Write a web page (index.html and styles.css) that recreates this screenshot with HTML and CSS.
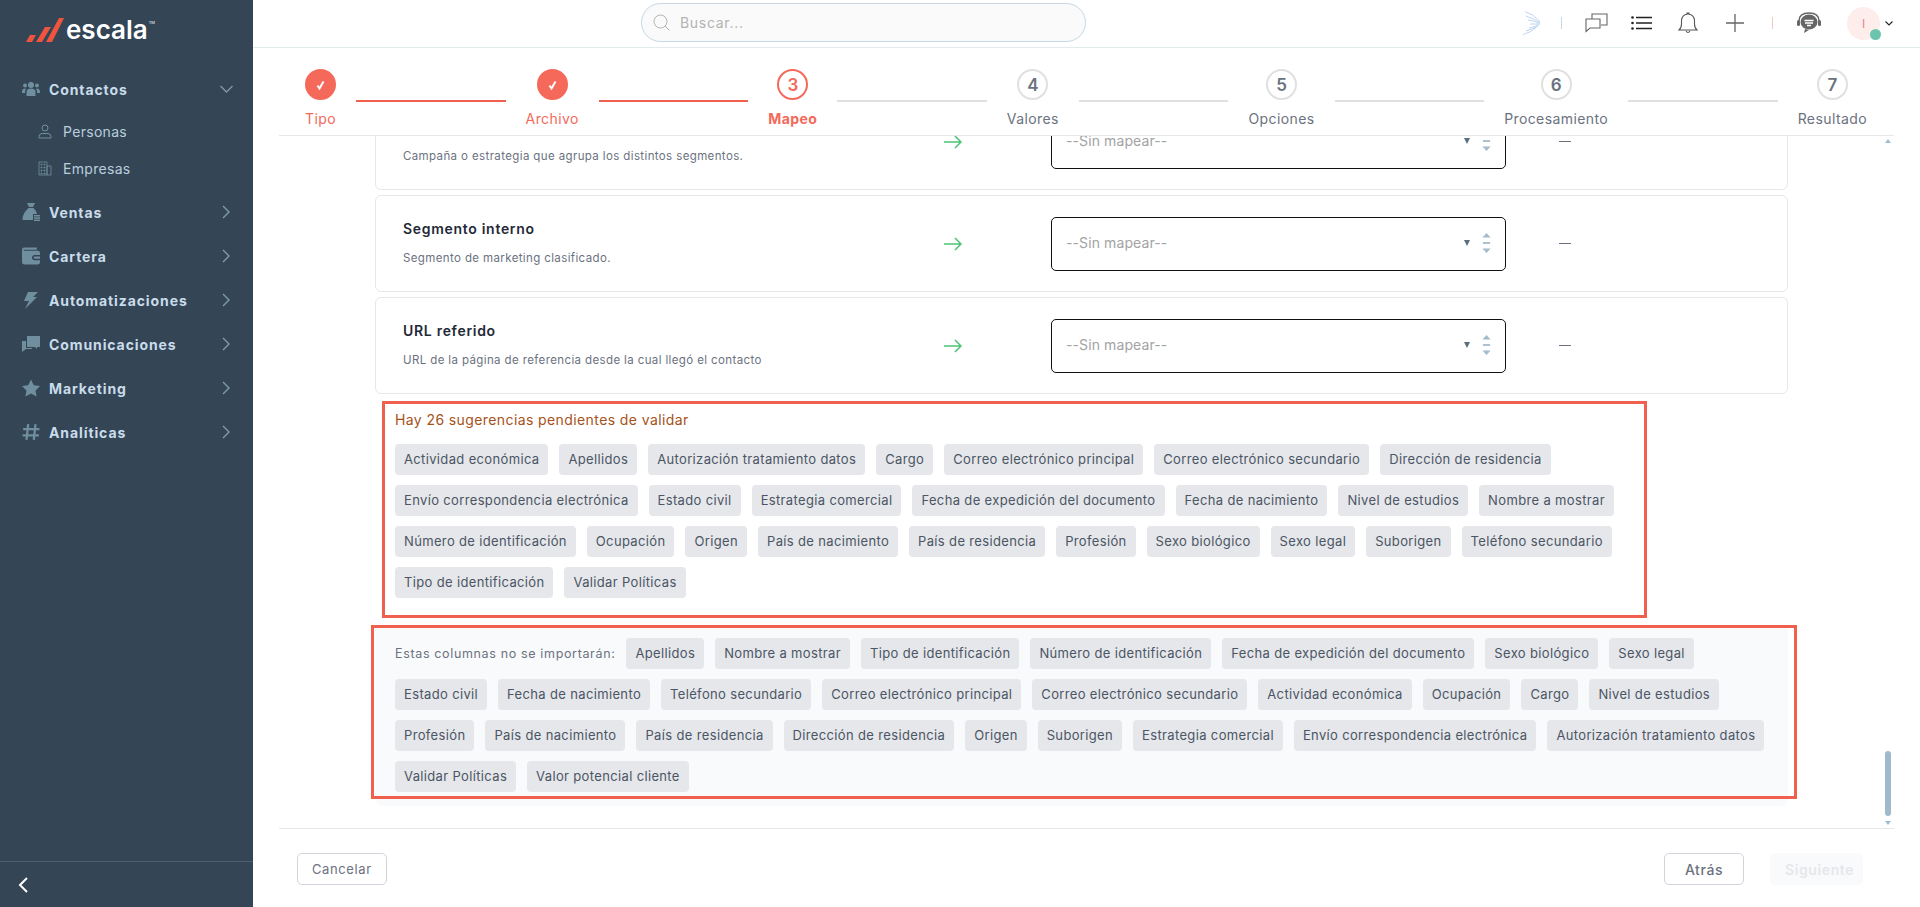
FILE: index.html
```html
<!DOCTYPE html>
<html lang="es">
<head>
    <meta charset="UTF-8">
    <title>Escala - Importar contactos</title>
    <link rel="stylesheet" href="styles.css">
</head>
<body>
    <svg class="defs" width="0" height="0">
        <symbol id="chev" viewBox="0 0 10 16"><path d="M2 2l6 6-6 6" fill="none" stroke="currentColor" stroke-width="1.4"/></symbol>
        <symbol id="arrow" viewBox="0 0 18 14"><path d="M0 7h17M11 1l6 6-6 6" fill="none" stroke="currentColor" stroke-width="1.5"/></symbol>
        <symbol id="spin" viewBox="0 0 10 22"><path d="M5 0l4.500 5H.5zM5 22l4.500-5H.5z" fill="#a3bccb"/><rect x="1" y="10" width="8" height="2" fill="#a3bccb"/></symbol>
        <symbol id="check" viewBox="0 0 9 10"><path d="M1.500 5.500L3.500 8.500 7.500 1.500" fill="none" stroke="#fff" stroke-width="2"/></symbol>
    </svg>

    <aside class="sidebar">
        <div class="logo">
            <svg width="38" height="26" viewBox="0 0 38 26"><path d="M0 25l4-7h6l-4 7zM10 25l9-15h6l-9 15zM20 25L33 1h5L26 25z" fill="#f0533e"/></svg>
            <span class="logo-text">escala</span><span class="logo-tm">TM</span>
        </div>
        <nav class="menu">
            <a class="menu-item">
                <svg class="menu-icon" viewBox="0 0 18 16"><circle cx="9" cy="4" r="3"/><circle cx="3" cy="4.5" r="2"/><circle cx="15" cy="4.5" r="2"/><path d="M4.500 15V11q0-3.500 4.500-3.500t4.500 3.500v4zM0 11q0-3.500 3-3.500l1 .5q-1 1-1 3v1H0zM18 11q0-3.500-3-3.500l-1 .5q1 1 1 3v1h3z"/></svg>
                <span>Contactos</span>
                <svg class="menu-chev down" viewBox="0 0 14 8"><path d="M1 1l6 6 6-6" fill="none" stroke="currentColor" stroke-width="1.300"/></svg>
            </a>
            <div class="menu-subs">
                <a class="menu-sub">
                    <svg class="sub-icon" viewBox="0 0 14 15"><circle cx="7" cy="4" r="3" fill="none" stroke="currentColor"/><path d="M1 14v-1.500q0-2.500 3-3h6q3 .5 3 3V14z" fill="none" stroke="currentColor"/></svg>
                    <span>Personas</span>
                </a>
                <a class="menu-sub">
                    <svg class="sub-icon" viewBox="0 0 14 15"><path d="M1 14V1h8v13zM9 5h4v9H9zM3 3h1v1H3zM6 3h1v1H6zM3 6h1v1H3zM6 6h1v1H6zM3 9h1v1H3zM6 9h1v1H6zM3 12h1v1H3zM6 12h1v1H6z" fill="none" stroke="currentColor" stroke-width=".8"/></svg>
                    <span>Empresas</span>
                </a>
            </div>
            <a class="menu-item">
                <svg class="menu-icon" viewBox="0 0 18 18"><path d="M5 0h8l-2 4H7zM6.500 5h5q3 3 3.500 6H11v6H1q-1-1 0-4 1-4 5.500-8z"/><path d="M12 12h6v1.500h-6zM12 14.200h6v1.500h-6zM12 16.400h6V18h-6z"/></svg>
                <span>Ventas</span>
                <svg class="menu-chev"><use href="#chev"/></svg>
            </a>
            <a class="menu-item">
                <svg class="menu-icon" viewBox="0 0 17 16"><path d="M2 0h12v2H2q-.5 0-.5.500T2 3h13q2 0 2 2v2h-5a2.500 2.500 0 0 0 0 5h5v2q0 2-2 2H2q-2 0-2-2V2q0-2 2-2zM12 8.500h5v2h-5a1 1 0 0 1 0-2z"/></svg>
                <span>Cartera</span>
                <svg class="menu-chev"><use href="#chev"/></svg>
            </a>
            <a class="menu-item">
                <svg class="menu-icon" viewBox="0 0 16 18"><path d="M5 1h10L10 6h4L2 18l4-8H1z"/></svg>
                <span>Automatizaciones</span>
                <svg class="menu-chev"><use href="#chev"/></svg>
            </a>
            <a class="menu-item">
                <svg class="menu-icon" viewBox="0 0 18 16"><path d="M5 0h13v11h-3v2l-2-2H5z"/><path d="M0 5h4v7h6v1H4l-4 3z"/></svg>
                <span>Comunicaciones</span>
                <svg class="menu-chev"><use href="#chev"/></svg>
            </a>
            <a class="menu-item">
                <svg class="menu-icon" viewBox="0 0 18 17"><path d="M9 0l2.800 5.800 6.200.8-4.500 4.400 1.100 6L9 14.100 3.400 17l1.100-6L0 6.600l6.200-.8z"/></svg>
                <span>Marketing</span>
                <svg class="menu-chev"><use href="#chev"/></svg>
            </a>
            <a class="menu-item">
                <svg class="menu-icon" viewBox="0 0 16 16"><path d="M5.500 1L4 15M12 1l-1.500 14M1 5.500h14.500M.500 11H15" fill="none" stroke="currentColor" stroke-width="2"/></svg>
                <span>Analíticas</span>
                <svg class="menu-chev"><use href="#chev"/></svg>
            </a>
        </nav>
        <div class="collapse">
            <svg width="10" height="16" viewBox="0 0 10 16"><path d="M9 1L2 8l7 7" fill="none" stroke="#fff" stroke-width="2"/></svg>
        </div>
    </aside>

    <div class="page">
        <header class="topbar">
            <div class="search">
                <svg width="17" height="17" viewBox="0 0 17 17"><circle cx="7.500" cy="7.500" r="6.500" fill="none" stroke="#b5b5b5"/><path d="M12 12l4.500 4.500" stroke="#b5b5b5"/></svg>
                <span>Buscar...</span>
            </div>
            <div class="tools">
                <svg class="tool wing" width="20" height="24" viewBox="0 0 20 24"><path d="M3 .5q9 3 15 10M4 5q8 3 14 6.500M6 9q7 1 12 3.500M8 13h10M7 17q6-1 10-3.500M4 20q7-2 12-5M1 23.500q8-2 13-7" fill="none" stroke="#b9cff2" stroke-width=".9"/></svg>
                <i class="tool-sep blue"></i>
                <svg class="tool chat" width="24" height="20" viewBox="0 0 24 20"><path d="M7 6V1h15v11h-6M1 6h14v9H5l-4 3.500z" fill="none" stroke="#666" stroke-width="1.100"/></svg>
                <svg class="tool list" width="22" height="14" viewBox="0 0 22 14"><path d="M5 1.500h16M5 7h16M5 12.500h16" stroke="#222" stroke-width="1.500"/><circle cx="1.500" cy="1.500" r="1.300" fill="#222"/><circle cx="1.500" cy="7" r="1.300" fill="#222"/><circle cx="1.500" cy="12.500" r="1.300" fill="#222"/></svg>
                <svg class="tool bell" width="20" height="22" viewBox="0 0 20 22"><path d="M1 18q2.500-2 2.500-6V8.500a6.500 6.500 0 0 1 13 0V12q0 4 2.500 6zM9 2V1h2v1M8 19q2 3 4 0" fill="none" stroke="#555" stroke-width="1.100"/></svg>
                <svg class="tool plus" width="18" height="18" viewBox="0 0 18 18"><path d="M9 0v18M0 9h18" stroke="#666" stroke-width="1.300"/></svg>
                <i class="tool-sep pink"></i>
                <svg class="tool help" width="24" height="22" viewBox="0 0 24 22"><path d="M2 9q0-8 10-8t10 8" fill="none" stroke="#666" stroke-width="1.500"/><ellipse cx="12" cy="10" rx="8.500" ry="7.500" fill="#666"/><path d="M8 17l-1 4 5-3z" fill="#666"/><rect x="0" y="8" width="3" height="6" rx="1.500" fill="#666"/><rect x="21" y="8" width="3" height="6" rx="1.500" fill="#666"/><path d="M7.500 8.500h9M8 11h8M10 13.500h4" stroke="#fff" stroke-width="1.300"/></svg>
                <div class="avatar"><span>I</span><i class="status"></i></div>
                <svg class="avatar-chev" width="8" height="5" viewBox="0 0 8 5"><path d="M.5.500L4 4 7.500.500" fill="none" stroke="#222" stroke-width="1.100"/></svg>
            </div>
        </header>

        <main class="wizard">
            <ol class="steps">
                <li class="step done"><span class="step-dot"><svg class="step-check"><use href="#check"/></svg></span><span class="step-name">Tipo</span></li>
                <li class="step-line on"></li>
                <li class="step done"><span class="step-dot"><svg class="step-check"><use href="#check"/></svg></span><span class="step-name">Archivo</span></li>
                <li class="step-line on"></li>
                <li class="step current"><span class="step-dot">3</span><span class="step-name">Mapeo</span></li>
                <li class="step-line"></li>
                <li class="step"><span class="step-dot">4</span><span class="step-name">Valores</span></li>
                <li class="step-line"></li>
                <li class="step"><span class="step-dot">5</span><span class="step-name">Opciones</span></li>
                <li class="step-line"></li>
                <li class="step"><span class="step-dot">6</span><span class="step-name">Procesamiento</span></li>
                <li class="step-line"></li>
                <li class="step"><span class="step-dot">7</span><span class="step-name">Resultado</span></li>
            </ol>

            <section class="scroller">
                <div class="scroll-body">
                    <div class="field">
                        <div class="field-info">
                            <h4>&nbsp;</h4>
                            <p>Campaña o estrategia que agrupa los distintos segmentos.</p>
                        </div>
                        <svg class="field-arrow"><use href="#arrow"/></svg>
                        <div class="map-select"><span>--Sin mapear--</span><i class="caret"></i><svg class="spin"><use href="#spin"/></svg></div>
                        <i class="field-dash"></i>
                    </div>
                    <div class="field">
                        <div class="field-info">
                            <h4>Segmento interno</h4>
                            <p>Segmento de marketing clasificado.</p>
                        </div>
                        <svg class="field-arrow"><use href="#arrow"/></svg>
                        <div class="map-select"><span>--Sin mapear--</span><i class="caret"></i><svg class="spin"><use href="#spin"/></svg></div>
                        <i class="field-dash"></i>
                    </div>
                    <div class="field">
                        <div class="field-info">
                            <h4>URL referido</h4>
                            <p>URL de la página de referencia desde la cual llegó el contacto</p>
                        </div>
                        <svg class="field-arrow"><use href="#arrow"/></svg>
                        <div class="map-select"><span>--Sin mapear--</span><i class="caret"></i><svg class="spin"><use href="#spin"/></svg></div>
                        <i class="field-dash"></i>
                    </div>

                    <div class="suggest">
                        <p class="suggest-title">Hay 26 sugerencias pendientes de validar</p>
                        <div class="chips">
                            <span class="chip">Actividad económica</span>
                            <span class="chip">Apellidos</span>
                            <span class="chip">Autorización tratamiento datos</span>
                            <span class="chip">Cargo</span>
                            <span class="chip">Correo electrónico principal</span>
                            <span class="chip">Correo electrónico secundario</span>
                            <span class="chip">Dirección de residencia</span>
                            <span class="chip">Envío correspondencia electrónica</span>
                            <span class="chip">Estado civil</span>
                            <span class="chip">Estrategia comercial</span>
                            <span class="chip">Fecha de expedición del documento</span>
                            <span class="chip">Fecha de nacimiento</span>
                            <span class="chip">Nivel de estudios</span>
                            <span class="chip">Nombre a mostrar</span>
                            <span class="chip">Número de identificación</span>
                            <span class="chip">Ocupación</span>
                            <span class="chip">Origen</span>
                            <span class="chip">País de nacimiento</span>
                            <span class="chip">País de residencia</span>
                            <span class="chip">Profesión</span>
                            <span class="chip">Sexo biológico</span>
                            <span class="chip">Sexo legal</span>
                            <span class="chip">Suborigen</span>
                            <span class="chip">Teléfono secundario</span>
                            <span class="chip">Tipo de identificación</span>
                            <span class="chip">Validar Políticas</span>
                        </div>
                    </div>

                    <div class="ignored">
                        <div class="chips">
                            <span class="ignored-label">Estas columnas no se importarán:</span>
                            <span class="chip">Apellidos</span>
                            <span class="chip">Nombre a mostrar</span>
                            <span class="chip">Tipo de identificación</span>
                            <span class="chip">Número de identificación</span>
                            <span class="chip">Fecha de expedición del documento</span>
                            <span class="chip">Sexo biológico</span>
                            <span class="chip">Sexo legal</span>
                            <span class="chip">Estado civil</span>
                            <span class="chip">Fecha de nacimiento</span>
                            <span class="chip">Teléfono secundario</span>
                            <span class="chip">Correo electrónico principal</span>
                            <span class="chip">Correo electrónico secundario</span>
                            <span class="chip">Actividad económica</span>
                            <span class="chip">Ocupación</span>
                            <span class="chip">Cargo</span>
                            <span class="chip">Nivel de estudios</span>
                            <span class="chip">Profesión</span>
                            <span class="chip">País de nacimiento</span>
                            <span class="chip">País de residencia</span>
                            <span class="chip">Dirección de residencia</span>
                            <span class="chip">Origen</span>
                            <span class="chip">Suborigen</span>
                            <span class="chip">Estrategia comercial</span>
                            <span class="chip">Envío correspondencia electrónica</span>
                            <span class="chip">Autorización tratamiento datos</span>
                            <span class="chip">Validar Políticas</span>
                            <span class="chip">Valor potencial cliente</span>
                        </div>
                        <div class="ignored-mark"></div>
                    </div>
                </div>
                <div class="scrollbar">
                    <i class="scroll-up"></i>
                    <i class="scroll-thumb"></i>
                    <i class="scroll-down"></i>
                </div>
            </section>

            <footer class="actions">
                <button class="btn">Cancelar</button>
                <button class="btn btn-back">Atrás</button>
                <button class="btn btn-next">Siguiente</button>
            </footer>
        </main>
    </div>
</body>
</html>
```

FILE: styles.css
```css
*{box-sizing: border-box;}
html, body{
    margin: 0;
    height: 100%;
}
body{
    display: flex;
    height: 907px;
    overflow: hidden;
    font-family: "Inter", "Noto Sans", sans-serif;
    color: #4b5563;
    background: #fff;
}
.defs{
    position: absolute;
}

/* sidebar */
.sidebar{
    display: flex;
    flex-direction: column;
    flex: 0 0 253px;
    background: #344556;
}
.logo{
    display: flex;
    align-items: flex-start;
    height: 67px;
    padding: 17px 0 0 26px;
}
.logo-text{
    margin-left: 2px;
    font-size: 26px;
    line-height: 26px;
    font-weight: 600;
    color: #fff;
}
.logo-tm{
    font-size: 4px;
    line-height: 12px;
    margin-left: 1px;
    color: #fff;
}
.menu{
    flex: 1;
}
.menu-item{
    display: flex;
    align-items: center;
    height: 44px;
    padding-left: 22px;
    font-size: 14px;
    font-weight: 700;
    letter-spacing: .9px;
    color: #c9dcea;
}
.menu-icon{
    width: 18px;
    height: 18px;
    margin-right: 9px;
    fill: #6f8f9f;
    color: #6f8f9f;
}
.menu-chev{
    width: 10px;
    height: 16px;
    margin-left: auto;
    margin-right: 22px;
    color: #7f9aaa;
}
.menu-chev.down{
    width: 15px;
    height: 8px;
    margin-right: 19px;
}
.menu-subs{
    margin: 2px 0 3px;
}
.menu-sub{
    display: flex;
    align-items: center;
    height: 37px;
    padding-left: 38px;
    font-size: 14px;
    letter-spacing: .3px;
    color: #b9cedd;
}
.menu-sub span{
    margin-left: 11px;
}
.sub-icon{
    width: 14px;
    height: 15px;
    color: #6f8f9f;
}
.collapse{
    display: flex;
    align-items: center;
    height: 46px;
    padding-left: 18px;
    border-top: 1px solid #4d5f70;
}

/* top bar */
.page{
    flex: 1;
    display: flex;
    flex-direction: column;
    min-width: 0;
}
.topbar{
    display: flex;
    align-items: flex-start;
    flex: 0 0 48px;
    padding: 3px 0 0 388px;
    border-bottom: 1px solid #e3ecec;
}
.search{
    display: flex;
    align-items: center;
    gap: 10px;
    width: 445px;
    height: 39px;
    padding-left: 11px;
    border: 1px solid #c5d8e4;
    border-radius: 20px;
    background: #fafafa;
    font-size: 14px;
    letter-spacing: .7px;
    color: #b3b3b3;
}
.tools{
    display: flex;
    align-items: center;
    height: 40px;
    margin-left: auto;
}
.tool{
    flex: none;
}
.wing{
    margin-right: 19px;
}
.tool-sep{
    width: 1px;
    height: 12px;
    background: #c8d8e8;
}
.tool-sep.pink{
    background: #f3c9c5;
}
.chat{
    margin-left: 23px;
}
.list{
    margin-left: 22px;
}
.bell{
    margin-left: 25px;
}
.plus{
    margin-left: 28px;
}
.tools .pink{
    margin-left: 28px;
}
.help{
    margin-left: 24px;
}
.avatar{
    position: relative;
    display: flex;
    align-items: center;
    justify-content: center;
    width: 33px;
    height: 33px;
    margin-left: 26px;
    border-radius: 50%;
    background: #fdeeec;
    font-size: 12px;
    color: #f27a8a;
}
.status{
    position: absolute;
    right: -1px;
    bottom: 0;
    width: 11px;
    height: 11px;
    border-radius: 50%;
    background: #6cc4ae;
}
.avatar-chev{
    margin: 0 27px 0 5px;
}

/* wizard */
.wizard{
    flex: 1;
    display: flex;
    flex-direction: column;
    min-height: 0;
    padding: 0 26px;
}
.steps{
    display: flex;
    flex: 0 0 88px;
    margin: 0;
    padding: 21px 27px 0 26px;
    list-style: none;
    border-bottom: 1px solid #e5e7eb;
}
.step{
    display: flex;
    flex-direction: column;
    align-items: center;
    font-size: 14px;
    color: #6b7280;
}
.step-dot{
    display: flex;
    align-items: center;
    justify-content: center;
    width: 31px;
    height: 31px;
    border: 2px solid #e0e0e0;
    border-radius: 50%;
    font-size: 17px;
    font-weight: 600;
    color: #6b7280;
}
.step-check{
    width: 9px;
    height: 10px;
}
.step-name{
    margin-top: 9px;
    line-height: 20px;
    letter-spacing: .4px;
}
.step.done .step-dot{
    border-color: #f4695a;
    background: #f4695a;
}
.step.done{
    color: #f4695a;
}
.step.current{
    font-weight: 700;
    color: #f4695a;
}
.step.current .step-dot{
    border-color: #f4695a;
    color: #f4695a;
}
.step-line{
    flex: 1;
    height: 2px;
    margin: 31px 20px 0;
    background: #e0e0e0;
}
.step-line.on{
    background: #f0604f;
}

.scroller{
    flex: 1;
    display: flex;
    min-height: 0;
    overflow: hidden;
    border-bottom: 1px solid #e5e7eb;
}
.scroll-body{
    flex: 1;
    margin-top: -43px;
    padding-left: 96px;
    padding-right: 94px;
}
.field{
    display: flex;
    align-items: center;
    height: 97px;
    margin-bottom: 5px;
    padding-left: 27px;
    border: 1px solid #e5e7eb;
    border-radius: 6px;
}
.field-info{
    flex: 0 0 541px;
    padding-bottom: 3px;
}
.field-info h4{
    margin: 0 0 14px;
    font-size: 14px;
    font-weight: 600;
    letter-spacing: .7px;
    color: #1f2937;
}
.field-info p{
    margin: 0;
    font-size: 11.500px;
    letter-spacing: .38px;
    color: #6b7280;
}
.field-arrow{
    width: 18px;
    height: 14px;
    color: #4cc275;
}
.map-select{
    display: flex;
    align-items: center;
    width: 455px;
    height: 54px;
    margin-left: 89px;
    padding: 0 14px 2px;
    border: 1.500px solid #111;
    border-radius: 5px;
    font-size: 14px;
    letter-spacing: .1px;
    color: #a3a3a3;
}
.caret{
    width: 0;
    height: 0;
    margin-left: auto;
    margin-right: 12px;
    border-left: 3.500px solid transparent;
    border-right: 3.500px solid transparent;
    border-top: 6px solid #5d6f7c;
}
.spin{
    width: 9px;
    height: 24px;
}
.field-dash{
    width: 12px;
    height: 1.500px;
    margin-left: 53px;
    background: #6b7280;
}

.suggest{
    width: 1265px;
    height: 217px;
    margin: 7px 0 7px 7px;
    padding: 6px 10px 0;
    border: 3px solid #f0604f;
}
.suggest-title{
    margin: 0 0 14px;
    font-size: 14px;
    line-height: 20px;
    letter-spacing: .4px;
    color: #a5521a;
}
.chips{
    display: flex;
    flex-wrap: wrap;
    align-items: center;
    gap: 10px 11px;
}
.chip{
    display: flex;
    align-items: center;
    height: 31px;
    padding: 0 9px 1px;
    border-radius: 4px;
    background: #e5e7eb;
    font-size: 13px;
    letter-spacing: .35px;
    color: #4b5563;
}
.ignored{
    position: relative;
    height: 181px;
    padding: 13px 12px 13px 20px;
    border-radius: 0 0 8px 8px;
    background: #f9fafb;
}
.ignored-label{
    font-size: 12.500px;
    letter-spacing: .65px;
    color: #6b7280;
}
.ignored-mark{
    position: absolute;
    left: -4px;
    right: -9px;
    top: 0;
    bottom: 7px;
    border: 3px solid #f0604f;
}
.scrollbar{
    position: relative;
    flex: 0 0 12px;
}
.scrollbar i{
    position: absolute;
    left: 3px;
}
.scroll-thumb{
    top: 615px;
    width: 6px;
    height: 65px;
    border-radius: 3px;
    background: #9fbac8;
}
.scroll-up, .scroll-down{
    width: 0;
    height: 0;
    border-left: 3px solid transparent;
    border-right: 3px solid transparent;
}
.scroll-up{
    top: 3px;
    border-bottom: 4px solid #a3bccb;
}
.scroll-down{
    top: 685px;
    border-top: 4px solid #a3bccb;
}

.actions{
    display: flex;
    align-items: flex-start;
    flex: 0 0 78px;
    gap: 26px;
    padding: 24px 31px 0 18px;
}
.btn{
    height: 32px;
    padding: 0 14px;
    border: 1px solid #d1d5db;
    border-radius: 5px;
    background: #fff;
    font-family: inherit;
    font-size: 13px;
    letter-spacing: .6px;
    color: #6b7280;
}
.btn-back{
    width: 80px;
    margin-left: auto;
    font-size: 14px;
    font-weight: 500;
}
.btn-next{
    width: 93px;
    border-color: #f9fafb;
    background: #f9fafb;
    font-size: 14px;
    font-weight: 600;
    color: #e5e7eb;
}
```
